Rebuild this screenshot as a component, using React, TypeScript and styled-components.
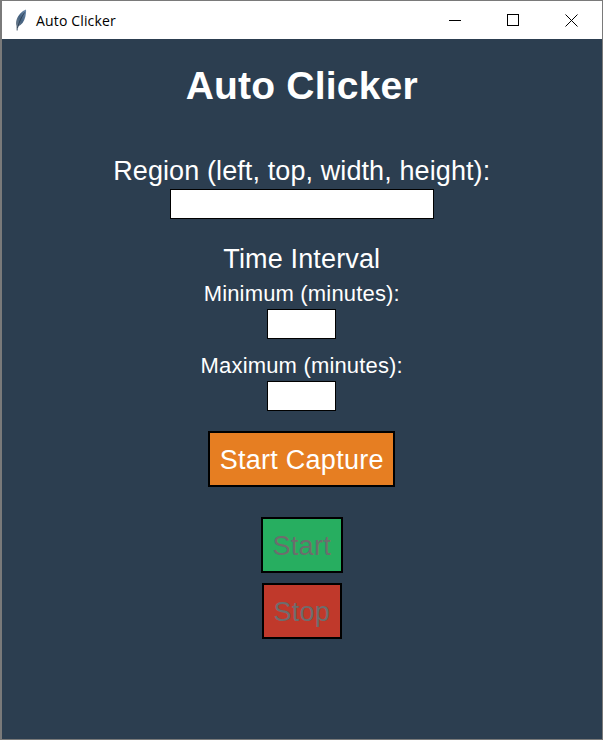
import React from 'react';
import styled, { createGlobalStyle } from 'styled-components';

const Global = createGlobalStyle`
  html, body { margin: 0; padding: 0; background: #2c3e50; }
  * { box-sizing: border-box; }
`;

const Frame = styled.div`
  width: 603px;
  height: 740px;
  display: flex;
  flex-direction: column;
  border: solid #7a7a7a;
  border-width: 1px 1px 1px 2px;
  overflow: hidden;
  font-family: "Liberation Sans", Arial, sans-serif;
  background: #2c3e50;
`;

const TitleBar = styled.header`
  flex: none;
  height: 38px;
  display: flex;
  align-items: center;
  padding-right: 2px;
  background: #fff;
`;

const AppIcon = styled.svg`
  flex: none;
  width: 12px;
  height: 22px;
  margin-left: 13px;
`;

const WindowTitle = styled.span`
  flex: 1;
  margin-left: 9px;
  font-family: "Open Sans", "Noto Sans", sans-serif;
  font-size: 14px;
  letter-spacing: 0.15px;
  color: #000;
`;

const WindowButton = styled.div`
  flex: none;
  width: 58px;
  height: 38px;
  display: flex;
  align-items: center;
  justify-content: center;
`;

const Content = styled.main`
  flex: 1;
  display: flex;
  flex-direction: column;
  align-items: center;
  padding-right: 0.5px;
  color: #fff;
`;

const Title = styled.h1`
  margin: 25px 0 0;
  height: 44px;
  line-height: 44px;
  font-size: 39px;
  letter-spacing: 0.2px;
  font-weight: 700;
`;

const Label = styled.label<{ $size: number; $top: number; $track: number }>`
  display: block;
  margin-top: ${p => p.$top}px;
  margin-bottom: -1px;
  padding-top: 1px;
  font-size: ${p => p.$size}px;
  line-height: ${p => Math.ceil(p.$size * 1.16)}px;
  letter-spacing: ${p => p.$track}px;
  white-space: nowrap;
`;

const Field = styled.input<{ $width: number }>`
  display: block;
  width: ${p => p.$width}px;
  height: 30px;
  margin: 3px 0 0;
  padding: 0 4px;
  background: #fff;
  border: 1px solid #000;
  border-radius: 0;
  outline: none;
`;

const Action = styled.button<{ $bg: string; $muted?: boolean; $width: number; $top: number }>`
  display: block;
  width: ${p => p.$width}px;
  height: 56px;
  margin-top: ${p => p.$top}px;
  padding: 2px 0 0;
  border: 2px solid #000;
  border-radius: 0;
  background: ${p => p.$bg};
  color: ${p => (p.$muted ? '#6d6d6d' : '#fff')};
  font-family: inherit;
  font-size: 27px;
  letter-spacing: 0.25px;
`;

export default function App() {
  return (
    <>
      <Global />
      <Frame>
        <TitleBar>
          <AppIcon viewBox="0 0 12 22">
            <defs>
              <linearGradient id="feather" x1="0" y1="1" x2="1" y2="0">
                <stop offset="0" stopColor="#7d8791" />
                <stop offset="0.5" stopColor="#44617f" />
                <stop offset="1" stopColor="#6f8db0" />
              </linearGradient>
            </defs>
            <path d="M11 0.500C7 2 3 6 1.500 11c-.7 2.500-.6 4.500 0 6L1.500 21.500h1.300l.3-4c3.400-1.500 6-5 7.200-9.500.6-2.500 1-5.500.7-7.500z" fill="url(#feather)" />
            <path d="M9.500 3.500C6.500 8 4 13 2.500 19" stroke="#26384d" strokeWidth="0.8" fill="none" />
          </AppIcon>
          <WindowTitle>Auto Clicker</WindowTitle>
          <WindowButton>
            <svg width="12" height="12" viewBox="0 0 12 12"><path d="M0 6.500H12" stroke="#000" strokeWidth="1" /></svg>
          </WindowButton>
          <WindowButton>
            <svg width="12" height="12" viewBox="0 0 12 12"><rect x="0.500" y="0.500" width="11" height="11" fill="none" stroke="#000" strokeWidth="1" /></svg>
          </WindowButton>
          <WindowButton>
            <svg width="13" height="13" viewBox="0 0 13 13"><path d="M0.500 0.500L12.500 12.500M12.500 0.500L0.500 12.500" stroke="#000" strokeWidth="1" /></svg>
          </WindowButton>
        </TitleBar>
        <Content>
          <Title>Auto Clicker</Title>
          <Label $size={27} $top={46} $track={0.1}>Region (left, top, width, height):</Label>
          <Field $width={264} />
          <Label $size={27} $top={23} $track={0.15}>Time Interval</Label>
          <Label $size={22} $top={6} $track={0.17}>Minimum (minutes):</Label>
          <Field $width={69} />
          <Label $size={22} $top={13} $track={0.17}>Maximum (minutes):</Label>
          <Field $width={69} />
          <Action $bg="#e67e22" $width={187} $top={20}>Start Capture</Action>
          <Action $bg="#27ae60" $muted disabled $width={82} $top={30}>Start</Action>
          <Action $bg="#c0392b" $muted disabled $width={80} $top={10}>Stop</Action>
        </Content>
      </Frame>
    </>
  );
}
